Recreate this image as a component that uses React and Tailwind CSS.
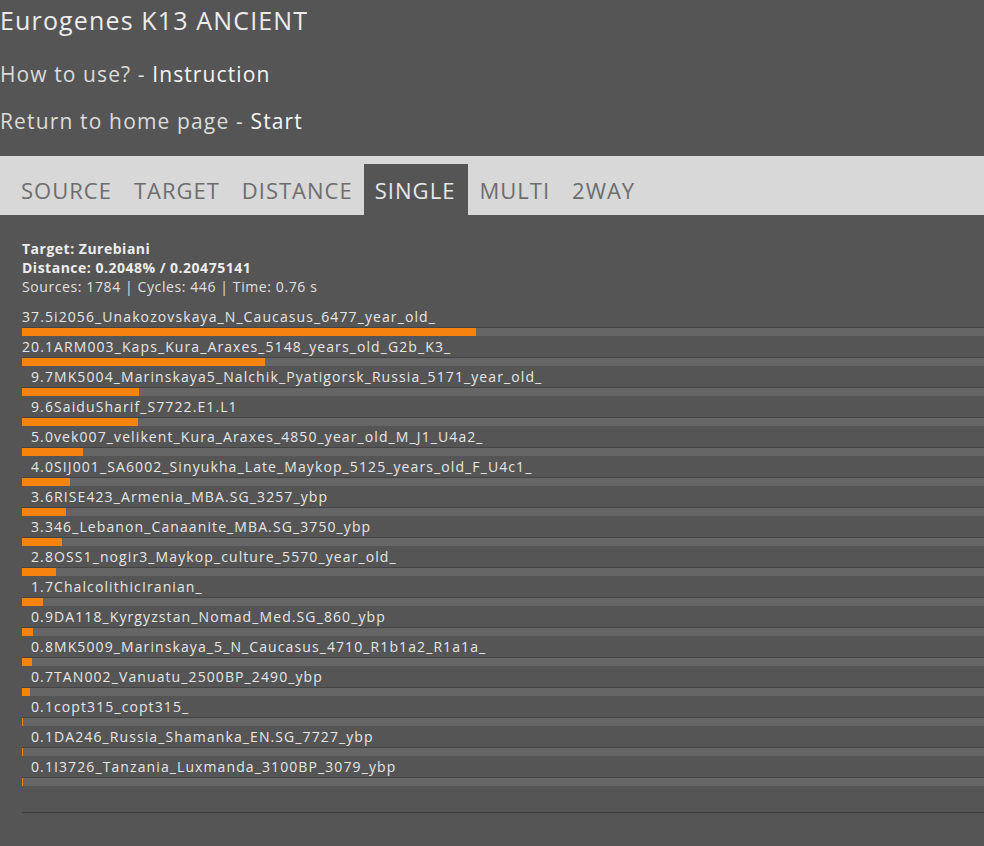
import React from "react";

const rows = [
  ["37.5", "i2056_Unakozovskaya_N_Caucasus_6477_year_old_"],
  ["20.1", "ARM003_Kaps_Kura_Araxes_5148_years_old_G2b_K3_"],
  ["9.7", "MK5004_Marinskaya5_Nalchik_Pyatigorsk_Russia_5171_year_old_"],
  ["9.6", "SaiduSharif_S7722.E1.L1"],
  ["5.0", "vek007_velikent_Kura_Araxes_4850_year_old_M_J1_U4a2_"],
  ["4.0", "SIJ001_SA6002_Sinyukha_Late_Maykop_5125_years_old_F_U4c1_"],
  ["3.6", "RISE423_Armenia_MBA.SG_3257_ybp"],
  ["3.3", "46_Lebanon_Canaanite_MBA.SG_3750_ybp"],
  ["2.8", "OSS1_nogir3_Maykop_culture_5570_year_old_"],
  ["1.7", "ChalcolithicIranian_"],
  ["0.9", "DA118_Kyrgyzstan_Nomad_Med.SG_860_ybp"],
  ["0.8", "MK5009_Marinskaya_5_N_Caucasus_4710_R1b1a2_R1a1a_"],
  ["0.7", "TAN002_Vanuatu_2500BP_2490_ybp"],
  ["0.1", "copt315_copt315_"],
  ["0.1", "DA246_Russia_Shamanka_EN.SG_7727_ybp"],
  ["0.1", "I3726_Tanzania_Luxmanda_3100BP_3079_ybp"],
];

const tabs = ["SOURCE", "TARGET", "DISTANCE", "SINGLE", "MULTI", "2WAY"];

export default function App() {
  return (
    <div
      className="min-h-[846px] w-full overflow-hidden bg-[#555555] text-[#e6e6e6]"
      style={{ fontFamily: '"Open Sans", "DejaVu Sans", sans-serif' }}
    >
      <div className="pt-[4px] text-[25px] leading-[32px] tracking-[1.15px] text-[#ececec]">Eurogenes K13 ANCIENT</div>
      <div className="mt-[23px] text-[21px] leading-[30px] tracking-[1.1px] text-[#dcdcdc]">
        How to use? - <span className="text-[#f6f6f6]">Instruction</span>
      </div>
      <div className="mt-[17px] text-[21px] leading-[30px] tracking-[1.15px] text-[#dcdcdc]">
        Return to home page - <span className="text-[#f6f6f6]">Start</span>
      </div>

      <div className="mt-[20px] flex h-[59px] items-end bg-[#d8d8d8] pl-[10px]">
        {tabs.map((t) => (
          <div
            key={t}
            className={
              t === "SINGLE"
                ? "flex h-[51px] items-center bg-[#555555] pl-[11px] pr-[13px] pt-[2px] text-[22px] tracking-[1.05px] text-[#e8e8e8]"
                : "flex h-[51px] items-center px-[11px] pt-[2px] text-[22px] tracking-[1px] text-[#6d6d6d]"
            }
          >
            {t}
          </div>
        ))}
      </div>

      <div className="pl-[22px] pt-[24px]">
        <div className="text-[14px] leading-[19px] font-bold tracking-[0.5px] text-[#ececec]">Target: Zurebiani</div>
        <div className="text-[14px] leading-[19px] font-bold tracking-[0.5px] text-[#ececec]">Distance: 0.2048% / 0.20475141</div>
        <div className="text-[14px] leading-[19px] tracking-[0.6px] text-[#e0e0e0]">Sources: 1784 | Cycles: 446 | Time: 0.76 s</div>

        <div className="mt-[10px]">
          {rows.map(([p, n], i) => (
            <div key={i} className="flex flex-col">
              <div className="flex h-[21px] items-center text-[14px] tracking-[1.1px] text-[#e6e6e6]">
                <span className="inline-block w-[32px] text-right">{p}</span>
                <span>{n}</span>
              </div>
              <div className="h-[9px] border-t border-[#444444] bg-[#666666]">
                <div
                  className="h-full bg-[#f5830e]"
                  style={{ width: `${parseFloat(p) * 12.1}px` }}
                />
              </div>
            </div>
          ))}
        </div>
        <div className="mt-[26px] border-t border-[#3a3a3a]" />
      </div>
    </div>
  );
}
